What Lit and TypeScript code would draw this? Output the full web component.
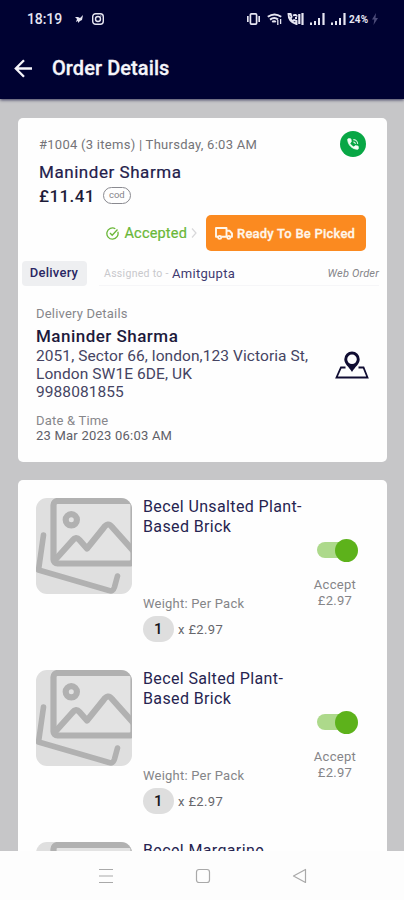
import { LitElement, html, css } from "lit";
import { customElement, property } from "lit/decorators.js";

@customElement("status-bar")
class StatusBar extends LitElement {
  static styles = css`
    :host { display: flex; height: 38px; align-items: center; padding: 0 26px 0 27px; color: #e6e6f2; }
    .time { font-size: 14px; letter-spacing: -0.1px; width: 48px; font-weight: 500; }
    .left { display: flex; align-items: center; gap: 9px; flex: 1; }
    .right { display: flex; align-items: center; }
    .pct { font-size: 10px; font-weight: 700; letter-spacing: 0.1px; margin-left: 3px; width: 21px; white-space: nowrap; }
    svg { display: block; fill: none; stroke: currentColor; }
    .solid { fill: currentColor; stroke: none; }
    .wifi { margin-left: 7px; }
    .call { margin-left: 5px; }
    .sig { margin-left: 6px; }
    .bolt { margin-left: 2px; color: #4a4a78; }
  `;
  signal() {
    return html`<svg class="solid sig" width="15" height="12" viewBox="0 0 15 12">
      <path d="M0 9.5h2V12H0zM4 8h2v4H4zM8 5h2v7H8zM12.4 0h2.2v12h-2.2z" />
    </svg>`;
  }
  render() {
    return html`
      <span class="time">18:19</span>
      <div class="left">
        <svg class="solid" width="8" height="8" viewBox="0 0 8 8"><path d="M0 2h3l2 1 3-3-1 5-2 1-2 2V6L1 7l1-3z" /></svg>
        <svg width="12" height="12" viewBox="0 0 12 12" stroke-width="1.4">
          <rect x=".7" y=".7" width="10.6" height="10.6" rx="3" /><circle cx="6" cy="6" r="2.5" />
          <path d="M8.500 3h.8" />
        </svg>
      </div>
      <div class="right">
        <svg width="13" height="12" viewBox="0 0 13 12" stroke-width="1.7">
          <rect x="3.400" y=".9" width="6.200" height="10.200" rx="1" /><path d="M.8 3v6M12.200 3v6" />
        </svg>
        <svg class="wifi" width="15" height="12" viewBox="0 0 15 12" stroke-width="2">
          <path d="M.8 3.800Q7.500-1 14.200 3.800M3 6.600q4.500-3.200 8 0M5.200 8.900q2-1.400 3.600 0" /><path d="M10.800 7v5M13.600 6v5" stroke-width="1.300" />
        </svg>
        <svg class="call" width="17" height="12" viewBox="0 0 17 12" stroke-width="1.900">
          <path d="M1.500 1q0 8 8 10V8L7 7 5.500 8.200Q4 7 3.600 5.600L4.600 4 3.600 1zM6 2.500Q9 1 10 3.500M8 5h2" />
          <path d="M12.300 1v10M15.500 0v12" stroke-width="2.200" />
        </svg>
        ${this.signal()}${this.signal()}
        <span class="pct">24%</span>
        <svg class="solid bolt" width="6" height="12" viewBox="0 0 6 12"><path d="M4 0 0 6.500h2.300L1.500 12 6 5H3.500z" /></svg>
      </div>
    `;
  }
}

@customElement("order-item")
class OrderItem extends LitElement {
  @property() name = "";
  @property() price = "";
  static styles = css`
    :host { display: grid; grid-template-columns: 96px 152px 58px; column-gap: 11px; height: 172px; box-sizing: border-box; padding-top: 18px; margin: 0 18px; }
    svg { display: block; }
    .info { display: flex; flex-direction: column; }
    .title { font-size: 16px; line-height: 20px; height: 97px; letter-spacing: 0.37px; color: #262450; margin-top: -1px; white-space: pre; }
    .weight { font-size: 13px; line-height: 20px; letter-spacing: 0.22px; color: #858588; }
    .qty { display: flex; align-items: center; gap: 4px; margin-top: 2px; font-size: 13px; letter-spacing: 0.35px; color: #67676c; }
    .badge { width: 31px; height: 26px; border-radius: 13px; background: #dedede; color: #151518; font-size: 15px; font-weight: 500; display: flex; align-items: center; justify-content: center; }
    .side { display: flex; flex-direction: column; align-items: center; padding-top: 40px; font-size: 13px; line-height: 16px; letter-spacing: 0.3px; color: #858588; white-space: nowrap; }
    .toggle { width: 41px; height: 24px; display: flex; align-items: center; margin: 0 0 15px 4px; }
    .track { width: 30px; height: 16px; border-radius: 8px 0 0 8px; background: #add98b; }
    .thumb { width: 23px; height: 23px; border-radius: 50%; background: #5db21b; margin-left: -12px; flex: none; }
  `;
  render() {
    return html`
      <svg width="96" height="96" viewBox="0 0 96 96">
        <defs><clipPath id="r"><rect width="96" height="96" rx="11" /></clipPath></defs>
        <g clip-path="url(#r)">
          <rect width="96" height="96" fill="#dfdfdf" />
          <g fill="none" stroke="#b1b1b1" stroke-width="6.200" stroke-linecap="round" stroke-linejoin="round">
            <path d="M7.500 37 2.500 72 73 92.500Q77 94 78.500 89L81.500 78" stroke-width="5.600" />
            <rect x="17.500" y="3" width="80" height="62.500" rx="4" fill="#e3e3e3" />
            <path d="M19 62 36.500 42.500Q40 38 43.500 42L51 50.500 67.500 30Q72 23.500 76 29L97 52.500" />
            <circle cx="35.300" cy="21.800" r="5.600" />
          </g>
        </g>
      </svg>
      <div class="info">
        <div class="title">${this.name}</div>
        <div class="weight">Weight: Per Pack</div>
        <div class="qty"><span class="badge">1</span><span>x ${this.price}</span></div>
      </div>
      <div class="side">
        <div class="toggle"><div class="track"></div><div class="thumb"></div></div>
        <span>Accept</span><span>${this.price}</span>
      </div>
    `;
  }
}

@customElement("app-root")
class AppRoot extends LitElement {
  static styles = css`
    :host { display: flex; flex-direction: column; width: 404px; height: 900px; overflow: hidden; background: #c6c6c8; font-family: Roboto, sans-serif; }
    svg { display: block; flex: none; }
    header { background: #000232; height: 99px; flex: none; box-shadow: 0 1px 3px #3c3c5c; z-index: 1; }
    .bar { display: flex; align-items: center; height: 60px; padding-left: 14px; color: #f5f5fa; }
    h1 { margin: 0 0 0 19px; font-size: 20px; font-weight: 500; letter-spacing: 0.08px; -webkit-text-stroke: 0.3px; }
    main { flex: 1; min-height: 0; overflow: hidden; padding: 19px 17px 0 18px; display: flex; flex-direction: column; gap: 18px; }
    .card { background: #fefefe; border-radius: 5px; flex: none; }
    .order { height: 344px; box-sizing: border-box; padding-top: 13px; }
    .row { display: flex; align-items: center; white-space: nowrap; }
    .head { height: 26px; padding: 0 21px; justify-content: space-between; }
    .meta { font-size: 13px; letter-spacing: 0.27px; color: #747478; }
    .phone { width: 26px; height: 26px; border-radius: 50%; background: #08a745; display: flex; align-items: center; justify-content: center; }
    .who { padding-left: 21px; margin-top: 2px; height: 25px; font-size: 17px; letter-spacing: 0.55px; color: #23204b; -webkit-text-stroke: 0.2px; }
    .total { padding-left: 21px; height: 23px; gap: 8px; font-size: 17px; font-weight: 500; letter-spacing: 0.4px; color: #1d1b38; }
    .pill { box-sizing: border-box; width: 28px; height: 17px; border: 1px solid #8a8a90; border-radius: 9px; font-size: 9.5px; font-weight: 400; line-height: 14px; text-align: center; letter-spacing: 0; color: #85858b; }
    .status { margin-top: 8px; height: 36px; padding: 0 21px 0 0; justify-content: flex-end; color: #6ab738; font-size: 14.5px; }
    .accepted { margin: 0 4px 0 5px; letter-spacing: 0.18px; -webkit-text-stroke: 0.2px; }
    .chev { margin-right: 9px; }
    .ready { box-sizing: border-box; width: 160px; height: 36px; padding-left: 9px; border-radius: 5px; background: #fb8a20; color: #fff6ea; display: flex; align-items: center; gap: 4px; font-size: 13px; font-weight: 500; letter-spacing: 0.22px; -webkit-text-stroke: 0.3px; }
    .tabs { margin-top: 10px; height: 25px; padding: 0 8px 0 4px; }
    .tab { width: 65px; height: 25px; border-radius: 4px; background: #eeeff1; color: #2a2763; font-size: 13px; font-weight: 500; line-height: 24px; text-align: center; letter-spacing: 0.25px; text-indent: -1px; }
    .assign { flex: 1; height: 25px; box-sizing: border-box; margin-left: 12px; padding-left: 5px; border-bottom: 1px solid #f6f6f8; }
    .label { width: 68px; font-size: 10.5px; letter-spacing: 0.3px; color: #c8c8cc; }
    .rider { flex: 1; font-size: 13px; letter-spacing: 0.3px; color: #3e3a70; }
    .source { font-size: 11px; font-style: italic; letter-spacing: 0.18px; color: #858589; }
    .delivery { padding: 18px 18px 0; display: flex; justify-content: space-between; }
    .cap { font-size: 13px; line-height: 20px; letter-spacing: 0.2px; color: #87878b; }
    .name { font-size: 17px; line-height: 25px; font-weight: 500; letter-spacing: 0.48px; color: #1d1a3c; }
    .addr { font-size: 15.5px; line-height: 18px; letter-spacing: 0.08px; color: #454463; margin-top: -2px; white-space: pre; }
    .addr2 { margin-top: 10px; }
    .date { font-size: 13px; line-height: 14px; letter-spacing: 0.22px; color: #606068; margin-top: -2px; }
    .map { margin-top: 47px; }
    .items { height: 540px; }
    nav { height: 49px; flex: none; background: #fdfdfd; display: flex; align-items: center; padding-left: 98px; gap: 81px; z-index: 1; }
  `;
  render() {
    return html`
      <header>
        <status-bar></status-bar>
        <div class="bar">
          <svg width="19" height="19" viewBox="0 0 19 19" fill="none" stroke="currentColor" stroke-width="2.300"><path d="M18 9.500H2M10 1.300 1.800 9.500 10 17.700" /></svg>
          <h1>Order Details</h1>
        </div>
      </header>
      <main>
        <section class="card order">
          <div class="row head">
            <span class="meta">#1004 (3 items) | Thursday, 6:03 AM</span>
            <span class="phone">
              <svg width="14" height="14" viewBox="0 0 24 24" fill="#f4fff6"><path d="M20 15.500c-1.200 0-2.500-.2-3.600-.6-.3-.1-.7 0-1 .2l-2.200 2.200a15 15 0 0 1-6.600-6.600l2.200-2.200c.3-.3.4-.7.2-1C8.700 6.400 8.500 5.200 8.500 4c0-.6-.4-1-1-1H4c-.6 0-1 .4-1 1 0 9.400 7.600 17 17 17 .6 0 1-.4 1-1v-3.500c0-.6-.4-1-1-1z" stroke="#f4fff6" stroke-width="1.500" /><path d="M12.500 4.500a7.500 7.500 0 0 1 7.500 7.500M12.500 8.500a3.500 3.500 0 0 1 3.500 3.500" fill="none" stroke="#d8f3df" stroke-width="1.800" /></svg>
            </span>
          </div>
          <div class="row who">Maninder Sharma</div>
          <div class="row total">£11.41 <span class="pill">cod</span></div>
          <div class="row status">
            <svg width="13" height="13" viewBox="0 0 13 13" fill="none" stroke="currentColor" stroke-width="1.300"><path d="M11.800 4.800A5.600 5.600 0 1 1 9.300 1.700M4 6l2.200 2.300L11.500 2.500" /></svg>
            <span class="accepted">Accepted</span>
            <svg class="chev" width="6" height="10" viewBox="0 0 6 10" fill="none" stroke="#d8d8da" stroke-width="1.200"><path d="M1 .5 5 5 1 9.500" /></svg>
            <span class="ready">
              <svg width="18" height="13" viewBox="0 0 18 13" fill="none" stroke="currentColor" stroke-width="1.900" stroke-linejoin="round"><path d="M3 9.800H1V1h10.500v8.800H6.500M11.500 3.700h3L17 6.500v3.300h-1.200" /><circle cx="4.700" cy="10.400" r="1.500" /><circle cx="13.800" cy="10.400" r="1.500" /></svg>
              Ready To Be Picked
            </span>
          </div>
          <div class="row tabs">
            <span class="tab">Delivery</span>
            <div class="row assign">
              <span class="label">Assigned to -</span>
              <span class="rider">Amitgupta</span>
              <span class="source">Web Order</span>
            </div>
          </div>
          <div class="delivery">
            <div>
              <div class="cap">Delivery Details</div>
              <div class="name">Maninder Sharma</div>
              <div class="addr">${"2051, Sector 66, london,123 Victoria St,\nLondon SW1E 6DE, UK\n9988081855"}</div>
              <div class="cap addr2">Date &amp; Time</div>
              <div class="date">23 Mar 2023 06:03 AM</div>
            </div>
            <svg class="map" width="34" height="28" viewBox="0 0 34 28" fill="none" stroke="#100d32">
              <path d="M10.500 16.500H6L1.500 26.500H32.500L28.500 16.500H23.500" stroke-width="1.800" />
              <path fill="#100d32" stroke="none" fill-rule="evenodd" d="M17 0.500a7.700 7.700 0 0 0-7.700 7.700c0 4.800 4.500 7.300 7.700 12.800 3.200-5.500 7.700-8 7.700-12.800A7.700 7.700 0 0 0 17 .5zm0 3a4.800 4.800 0 1 1 0 9.600 4.800 4.800 0 0 1 0-9.600z" />
            </svg>
          </div>
        </section>
        <section class="card items">
          <order-item name=${"Becel Unsalted Plant-\nBased Brick"} price="£2.97"></order-item>
          <order-item name=${"Becel Salted Plant-\nBased Brick"} price="£2.97"></order-item>
          <order-item name=${"Becel Margarine"} price="£2.97"></order-item>
        </section>
      </main>
      <nav>
        <svg width="16" height="16" viewBox="0 0 16 16" stroke="#a9a9a9" stroke-width="1.200"><path d="M1 1.500h14M1 8h14M1 14.500h14" /></svg>
        <svg width="16" height="16" viewBox="0 0 16 16" fill="none" stroke="#a9a9a9" stroke-width="1.200"><rect x="1.500" y="1.500" width="13" height="13" rx="2.500" /></svg>
        <svg width="16" height="16" viewBox="0 0 16 16" fill="none" stroke="#a9a9a9" stroke-width="1.200" stroke-linejoin="round"><path d="M13.500 1.500v13L1.500 8z" /></svg>
      </nav>
    `;
  }
}
